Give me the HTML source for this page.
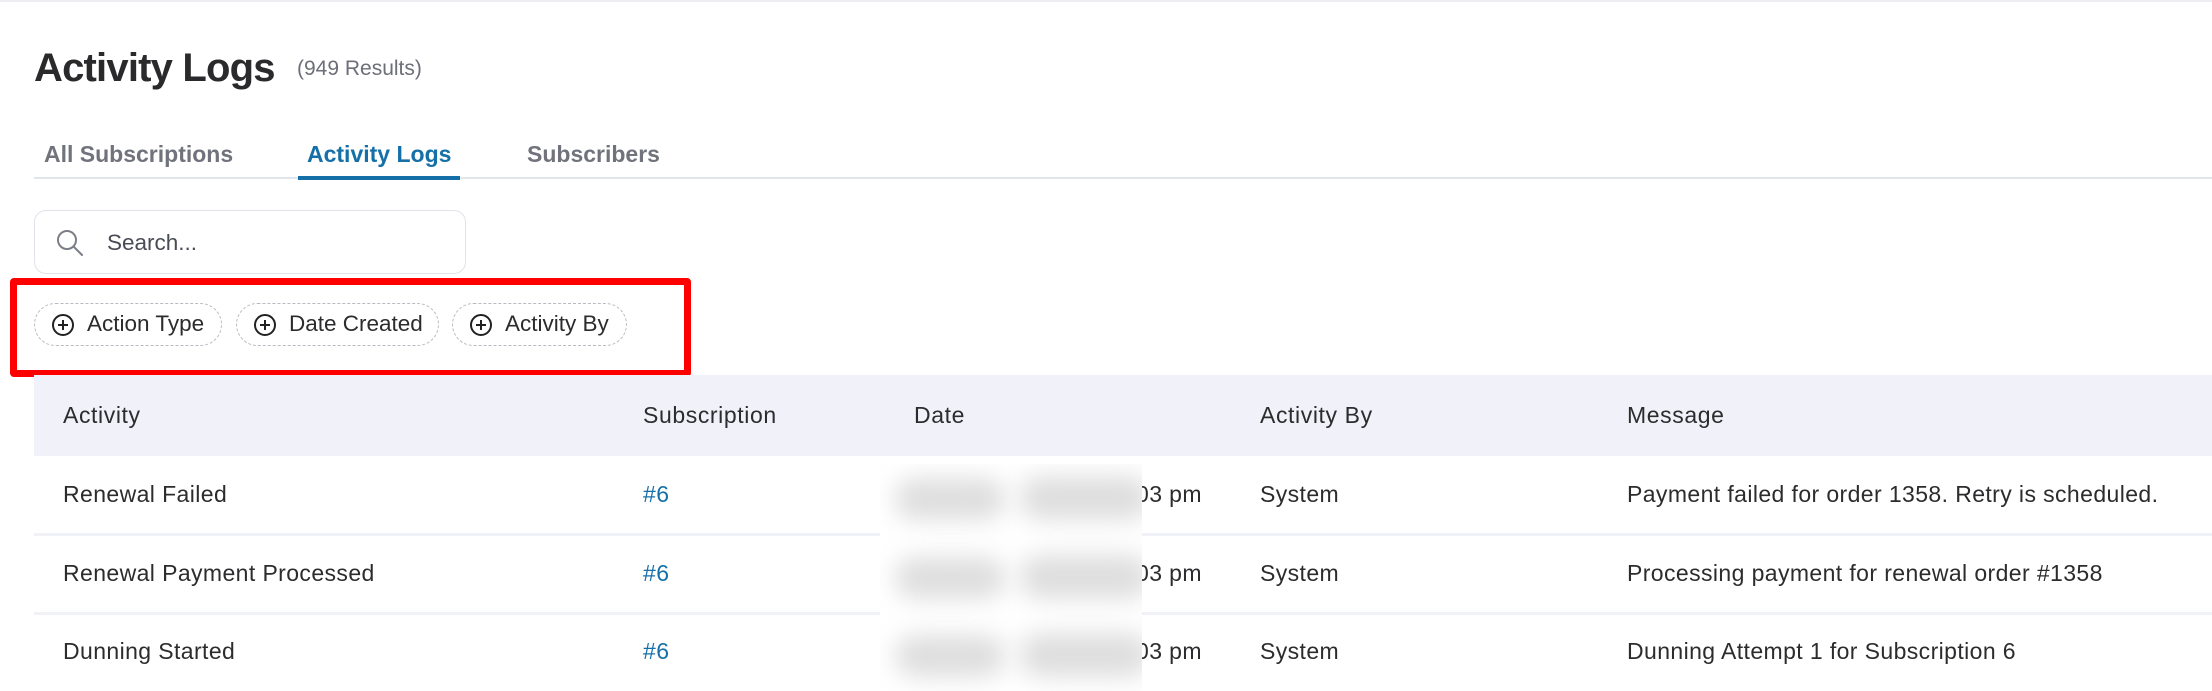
<!DOCTYPE html>
<html><head><meta charset="utf-8"><style>
*{margin:0;padding:0;box-sizing:border-box}
body{width:2212px;height:691px;overflow:hidden;background:#fff;font-family:"Liberation Sans",sans-serif;color:#2c2c2e;position:relative}
.a{position:absolute;white-space:nowrap}
.topline{left:0;top:0;width:2212px;height:2px;background:#eceef2}
h1{position:absolute;left:34px;top:46px;font-size:40px;font-weight:bold;color:#2a2a2c;letter-spacing:-0.8px}
.res{left:297px;top:57px;font-size:21px;color:#6d6f78}
.tab{top:141px;font-size:23px;font-weight:bold;color:#70737b}
.tabline{left:34px;top:177px;width:2178px;height:2px;background:#e3e5ec}
.tabact{left:298px;top:176px;width:162px;height:4px;background:#1570a8}
.search{left:34px;top:210px;width:432px;height:64px;border:1.5px solid #e1e3ea;border-radius:12px}
.chip{top:303px;height:43px;border:1.5px dashed #b8bac2;border-radius:22px;font-size:22.5px;color:#2c2c2e;padding-left:52px;line-height:40px}
.chip svg{position:absolute;left:16px;top:9px}
.red{left:10px;top:278px;width:681px;height:99px;border:7px solid #ff0000;border-radius:4px}
.thead{left:34px;top:375px;width:2178px;height:81px;background:#f1f2f9}
.th{top:402px;font-size:23px;color:#2c2c2e;letter-spacing:0.6px}
.td{font-size:23px;color:#2c2c2e;letter-spacing:0.4px}
.sep{left:34px;height:3px;width:2178px;background:#f1f2f7}
.lnk{color:#1570a8}
.blur{left:880px;top:464px;width:262px;height:227px;background:#fff;overflow:hidden}
.blob{position:absolute;background:#dedede;border-radius:20px;filter:blur(12px)}
</style></head><body>
<div class="a topline"></div>
<h1>Activity Logs</h1>
<div class="a res">(949 Results)</div>
<div class="a tab" style="left:44px">All Subscriptions</div>
<div class="a tab" style="left:307px;color:#1570a8">Activity Logs</div>
<div class="a tab" style="left:527px">Subscribers</div>
<div class="a tabline"></div>
<div class="a tabact"></div>
<div class="a search">
<svg style="position:absolute;left:20px;top:17px" width="30" height="30" viewBox="0 0 30 30"><circle cx="12" cy="12" r="9" fill="none" stroke="#7c7f88" stroke-width="2"/><line x1="18.5" y1="18.5" x2="27" y2="27" stroke="#7c7f88" stroke-width="2" stroke-linecap="round"/></svg>
<div class="a" style="left:72px;top:19px;font-size:22.5px;color:#4a4c55">Search...</div>
</div>
<div class="a chip" style="left:34px;width:188px"><svg width="24" height="24" viewBox="0 0 24 24"><circle cx="12" cy="12" r="10" fill="none" stroke="#222" stroke-width="2"/><path d="M12 7v10M7 12h10" stroke="#222" stroke-width="2"/></svg>Action Type</div>
<div class="a chip" style="left:236px;width:203px"><svg width="24" height="24" viewBox="0 0 24 24"><circle cx="12" cy="12" r="10" fill="none" stroke="#222" stroke-width="2"/><path d="M12 7v10M7 12h10" stroke="#222" stroke-width="2"/></svg>Date Created</div>
<div class="a chip" style="left:452px;width:175px"><svg width="24" height="24" viewBox="0 0 24 24"><circle cx="12" cy="12" r="10" fill="none" stroke="#222" stroke-width="2"/><path d="M12 7v10M7 12h10" stroke="#222" stroke-width="2"/></svg>Activity By</div>
<div class="a red"></div>
<div class="a thead"></div>
<div class="a th" style="left:63px">Activity</div>
<div class="a th" style="left:643px">Subscription</div>
<div class="a th" style="left:914px">Date</div>
<div class="a th" style="left:1260px">Activity By</div>
<div class="a th" style="left:1627px">Message</div>

<div class="a td" style="left:63px;top:481px">Renewal Failed</div>
<div class="a td lnk" style="left:643px;top:481px">#6</div>
<div class="a td" style="left:1136px;top:481px">03 pm</div>
<div class="a td" style="left:1260px;top:481px">System</div>
<div class="a td" style="left:1627px;top:481px">Payment failed for order 1358. Retry is scheduled.</div>
<div class="a sep" style="top:533px"></div>

<div class="a td" style="left:63px;top:560px">Renewal Payment Processed</div>
<div class="a td lnk" style="left:643px;top:560px">#6</div>
<div class="a td" style="left:1136px;top:560px">03 pm</div>
<div class="a td" style="left:1260px;top:560px">System</div>
<div class="a td" style="left:1627px;top:560px">Processing payment for renewal order #1358</div>
<div class="a sep" style="top:612px"></div>

<div class="a td" style="left:63px;top:638px">Dunning Started</div>
<div class="a td lnk" style="left:643px;top:638px">#6</div>
<div class="a td" style="left:1136px;top:638px">03 pm</div>
<div class="a td" style="left:1260px;top:638px">System</div>
<div class="a td" style="left:1627px;top:638px">Dunning Attempt 1 for Subscription 6</div>

<div class="a blur">
<div class="blob" style="left:15px;top:14px;width:110px;height:42px"></div>
<div class="blob" style="left:140px;top:12px;width:130px;height:44px"></div>
<div class="blob" style="left:15px;top:93px;width:110px;height:42px"></div>
<div class="blob" style="left:140px;top:91px;width:130px;height:44px"></div>
<div class="blob" style="left:15px;top:171px;width:110px;height:42px"></div>
<div class="blob" style="left:140px;top:169px;width:130px;height:44px"></div>
</div>
</body></html>
